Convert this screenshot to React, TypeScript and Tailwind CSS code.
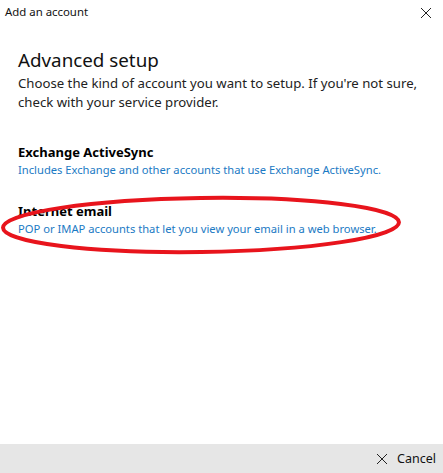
import React from "react";

export default function App() {
  const font = { fontFamily: '"Segoe UI", "Noto Sans", "Open Sans", sans-serif' };
  return (
    <div className="relative w-[443px] h-[473px] bg-white flex flex-col overflow-hidden text-black" style={font}>
      <div className="flex items-start justify-between h-[30px] pl-[5px] pr-[11px] pt-[2px]">
        <span className="text-[11.4px] leading-[20px] text-[#111]">Add an account</span>
        <svg width="12" height="12" viewBox="0 0 12 12" className="mt-[5px]">
          <path d="M1 1 L11 11 M11 1 L1 11" stroke="#222" strokeWidth="1" />
        </svg>
      </div>
      <div className="flex-1 flex flex-col pl-[18px] pr-[4px] pt-[17px]">
        <h1 className="text-[18.8px] leading-[26px] font-normal text-[#111]">Advanced setup</h1>
        <div className="text-[13.2px] leading-[19px] text-[#222] mt-[1px] flex flex-col">
          <span className="whitespace-nowrap">Choose the kind of account you want to setup. If you're not sure,</span>
          <span className="whitespace-nowrap">check with your service provider.</span>
        </div>
        <div className="mt-[31px] flex flex-col">
          <span className="text-[13px] leading-[18px] font-bold text-black">Exchange ActiveSync</span>
          <span className="text-[11.2px] leading-[18px] text-[#1b7ac4]">Includes Exchange and other accounts that use Exchange ActiveSync.</span>
        </div>
        <div className="mt-[23px] flex flex-col">
          <span className="text-[13px] leading-[18px] font-bold text-black">Internet email</span>
          <span className="text-[11.2px] leading-[18px] text-[#1b7ac4]">POP or IMAP accounts that let you view your email in a web browser.</span>
        </div>
      </div>
      <div className="h-[29px] bg-[#e6e6e6] flex items-center justify-end pr-[7px] gap-[9px]">
        <svg width="12" height="12" viewBox="0 0 12 12">
          <path d="M1 1 L11 11 M11 1 L1 11" stroke="#222" strokeWidth="1" />
        </svg>
        <span className="text-[12.5px] leading-[18px] text-[#111]">Cancel</span>
      </div>
      <svg className="absolute left-0 top-[190px] pointer-events-none" width="410" height="70" viewBox="0 0 410 70">
        <ellipse cx="201" cy="35" rx="198" ry="27" fill="none" stroke="#e8141c" strokeWidth="4" transform="rotate(-0.8 201 35)" />
      </svg>
    </div>
  );
}
